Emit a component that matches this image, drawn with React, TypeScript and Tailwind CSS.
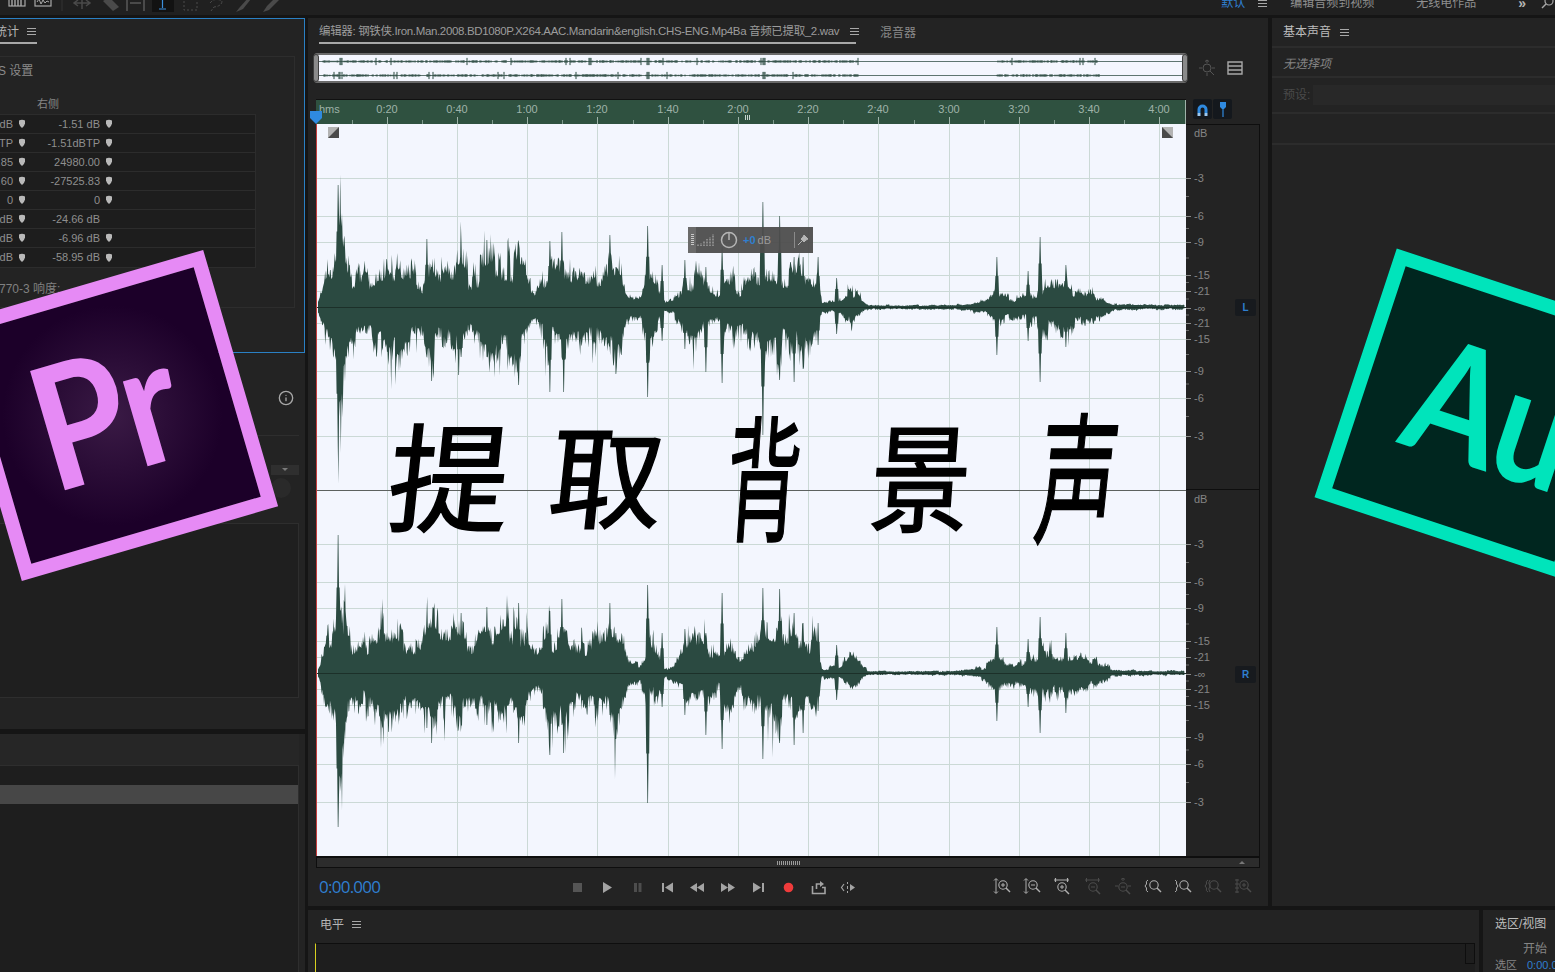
import { Info } from "lucide-react";

function rng(seed: number) {
  let a = seed;
  return () => {
    a |= 0;
    a = (a + 0x6d2b79f5) | 0;
    let t = Math.imul(a ^ (a >>> 15), 1 | a);
    t = (t + Math.imul(t ^ (t >>> 7), 61 | t)) ^ t;
    return ((t ^ (t >>> 14)) >>> 0) / 4294967296;
  };
}

const ENV: [number, number][] = [
  [318, 5], [325, 26], [329, 34], [336, 40], [338, 90], [341, 90], [343, 62], [347, 40], [350, 32], [366, 30], [370, 30], [377, 44], [395, 45], [422, 22], [427, 52], [445, 32], [461, 40], [470, 30], [481, 35], [505, 50], [523, 36], [534, 16], [548, 35], [563, 40], [570, 30], [591, 26], [613, 45], [623, 26], [627, 12], [640, 10], [647, 26], [657, 20], [665, 4], [673, 7], [684, 20], [698, 30], [718, 16], [731, 35], [740, 18], [763, 45], [784, 36], [799, 38], [818, 30], [822, 6], [838, 7], [852, 20], [863, 7], [868, 2], [950, 2], [960, 3], [985, 6], [995, 18], [1005, 12], [1020, 10], [1040, 22], [1060, 24], [1085, 18], [1105, 8], [1115, 3], [1185, 2],
];

function env(x: number) {
  for (let i = 1; i < ENV.length; i++) {
    if (x <= ENV[i][0]) {
      const [x0, y0] = ENV[i - 1];
      const [x1, y1] = ENV[i];
      return y0 + ((y1 - y0) * (x - x0)) / (x1 - x0);
    }
  }
  return 2;
}

const TOP_SPIKES: [number, number, number][] = [
  [338, 122, 140], [427, 68, 50], [432, 40, 74], [461, 67, 50], [459, 40, 68], [487, 67, 50], [519, 63, 78], [550, 66, 85], [562, 75, 50], [564, 40, 85], [610, 72, 40], [616, 40, 67], [648, 81, 90], [662, 42, 34], [685, 47, 42], [706, 40, 65], [722, 60, 76], [763, 105, 128], [780, 91, 73], [794, 50, 75], [803, 50, 62], [818, 50, 38], [837, 29, 27], [997, 50, 48], [1028, 36, 34], [1040, 70, 75], [1066, 42, 40],
];
const BOT_SPIKES: [number, number, number][] = [
  [338, 138, 154], [427, 60, 55], [432, 40, 70], [461, 60, 50], [487, 66, 52], [519, 70, 70], [550, 62, 82], [562, 74, 52], [564, 40, 80], [610, 70, 42], [616, 40, 66], [648, 88, 130], [662, 40, 34], [685, 44, 42], [706, 40, 62], [722, 80, 76], [763, 85, 86], [780, 84, 70], [794, 60, 72], [803, 50, 60], [818, 50, 38], [837, 28, 27], [997, 46, 48], [1028, 34, 34], [1040, 56, 60], [1066, 40, 40],
];

function wavePath(seed: number, cy: number, spikes: [number, number, number][]) {
  const r = rng(seed);
  const up: string[] = [];
  const down: string[] = [];
  let bandU = 1;
  let bandD = 1;
  let next = 318;
  for (let x = 318; x <= 1185; x += 0.6) {
    if (x >= next) {
      bandU = 0.62 + r() * 0.72;
      bandD = 0.62 + r() * 0.72;
      next = x + 2 + r() * 5;
    }
    const e = env(x) * (x < 822 ? 1.14 : 1);
    const a = r();
    const b = r();
    let u = e * bandU * (0.74 + 0.42 * a * a);
    let d = e * bandD * (0.74 + 0.46 * b * b);
    if (e > 18 && r() < 0.06) u *= 1.38;
    if (e > 18 && r() < 0.06) d *= 1.42;
    for (const s of spikes) {
      if (Math.abs(x - s[0]) < 0.6) {
        u = Math.max(u, s[1]);
        d = Math.max(d, s[2]);
      } else if (Math.abs(x - s[0]) < 1.8) {
        u = Math.max(u, s[1] * 0.62);
        d = Math.max(d, s[2] * 0.62);
      }
    }
    const px = (x - 316).toFixed(1);
    up.push(`${px} ${(cy - u).toFixed(1)}`);
    down.unshift(`${px} ${(cy + d).toFixed(1)}`);
  }
  return "M" + up.join("L") + "L" + down.join("L") + "Z";
}

const TOP_WAVE = wavePath(11, 183, TOP_SPIKES);
const BOT_WAVE = wavePath(29, 549, BOT_SPIKES);

const GRID_X = [387, 457, 527, 597, 668, 738, 808, 878, 949, 1019, 1089, 1159];
const GRID_Y = [178, 216, 242, 275, 291, 323, 339, 371, 398, 436, 544, 582, 608, 641, 657, 689, 705, 737, 764, 802];
const RULER = ["0:20", "0:40", "1:00", "1:20", "1:40", "2:00", "2:20", "2:40", "3:00", "3:20", "3:40", "4:00"];
const DB_TOP: [string, number][] = [["dB", 133], ["-3", 178], ["-6", 216], ["-9", 242], ["-15", 275], ["-21", 291], ["-∞", 308], ["-21", 323], ["-15", 339], ["-9", 371], ["-6", 398], ["-3", 436]];
const DB_BOT: [string, number][] = [["dB", 499], ["-3", 544], ["-6", 582], ["-9", 608], ["-15", 641], ["-21", 657], ["-∞", 674], ["-21", 689], ["-15", 705], ["-9", 737], ["-6", 764], ["-3", 802]];

function miniBars(seed: number, cy: number) {
  const r = rng(seed);
  const out: string[] = [];
  for (let x = 6; x < 790; x += 1) {
    const rx = x + 314;
    const inMain = (rx > 320 && rx < 857) || (rx > 994 && rx < 1098);
    if (!inMain) continue;
    if (r() < 0.3) continue;
    const big = r() < 0.04 || (rx > 336 && rx < 341) || (rx > 644 && rx < 648) || (rx > 760 && rx < 764);
    const h = big ? 3.6 : 0.6 + r() * 0.9;
    out.push(`M${x} ${(cy - h).toFixed(1)}V${(cy + h).toFixed(1)}`);
  }
  return out.join("");
}

const rowsData: [string, string, boolean][] = [
  ["dB", "-1.51 dB", true],
  ["TP", "-1.51dBTP", true],
  [".85", "24980.00", true],
  [".60", "-27525.83", true],
  ["0", "0", true],
  ["dB", "-24.66 dB", false],
  ["dB", "-6.96 dB", true],
  ["dB", "-58.95 dB", true],
];

const BIG: [string, string][] = [
  ["提", "[transform:skewX(-6deg)_scale(1.03,1)]"],
  ["取", "[transform:skewX(-6deg)_scale(0.97,0.95)]"],
  ["背", "[transform:skewX(-4deg)_scale(0.63,1.15)]"],
  ["景", "[transform:skewX(-4deg)_scale(0.85,1)]"],
  ["声", "[transform:skewX(-6deg)_scale(0.68,1.2)]"],
];

function Burger({ className = "" }: { className?: string }) {
  return (
    <span className={`flex w-[9px] flex-col gap-[2px] ${className}`}>
      <span className="h-px bg-[#a8a8a8]" />
      <span className="h-px bg-[#a8a8a8]" />
      <span className="h-px bg-[#a8a8a8]" />
    </span>
  );
}

function Marker() {
  return (
    <svg width="8" height="10" viewBox="0 0 8 10" className="shrink-0">
      <path d="M1 1.5Q4 0 7 1.5V4.5Q6.5 7 4 9Q1.5 7 1 4.5Z" fill="#b9b9b9" />
    </svg>
  );
}

function TopTools() {
  const c = "#4a4a4a";
  return (
    <svg width="300" height="15" viewBox="0 0 300 15" className="shrink-0">
      <rect x="9" y="-3" width="16" height="9" fill="none" stroke="#a8a8a8" strokeWidth="1.2" />
      <path d="M12 -2V6M15 -2V6M18 -2V6M21 -2V6" stroke="#a8a8a8" strokeWidth="1.4" />
      <rect x="35" y="-3" width="16" height="9" fill="none" stroke="#a8a8a8" strokeWidth="1.2" />
      <path d="M37 2L39 -1L41 4L43 0L45 3L47 1L49 2" fill="none" stroke="#a8a8a8" />
      <path d="M62 -2V11" stroke="#333" />
      <path d="M74 3H90M82 -3V9M86 0L90 3L86 6M78 0L74 3L78 6" fill="none" stroke={c} strokeWidth="1.5" />
      <path d="M103 1L109 -3L119 7L113 11Z" fill={c} />
      <path d="M127 -2V11M144 -2V11M130 3H141" stroke={c} strokeWidth="2" />
      <rect x="152" y="-2" width="22" height="14" fill="#121212" />
      <path d="M162.500 -2V8M159 9H166" stroke="#3c90dd" strokeWidth="1.2" fill="none" />
      <rect x="184" y="-1" width="13" height="11" fill="none" stroke={c} strokeDasharray="2 2" />
      <path d="M210 3Q215 -3 222 1Q222 6 214 7L211 11" fill="none" stroke={c} strokeDasharray="3 1.5" />
      <path d="M236 12L240 7L249 -3L251 -1L243 9Z" fill={c} />
      <path d="M263 12L267 6L276 -3L279 0L269 10Z" fill={c} />
    </svg>
  );
}

function Transport() {
  const g = "#a3a3a3";
  const items = [
    <rect key="s" x="4" y="3" width="9" height="9" fill="#555" />,
    <path key="p" d="M4 2L13 7.500L4 13Z" fill={g} />,
    <path key="pa" d="M5 3H8V12H5ZM9.500 3H12.500V12H9.500Z" fill="#4d4d4d" />,
    <path key="b" d="M3 3H5V12H3ZM14 2.500V12.500L6 7.500Z" fill={g} />,
    <path key="r" d="M8 3V12L1 7.500ZM15 3V12L8 7.500Z" fill={g} />,
    <path key="f" d="M1 3V12L8 7.500ZM8 3V12L15 7.500Z" fill={g} />,
    <path key="n" d="M3 2.500V12.500L11 7.500ZM12 3H14V12H12Z" fill={g} />,
    <circle key="rec" cx="8.500" cy="7.500" r="4.800" fill="#ef3b3b" />,
    <g key="l">
      <path d="M2.500 6V13.500H15V7.500H12" fill="none" stroke={g} strokeWidth="1.600" />
      <path d="M6.500 9V4H10" fill="none" stroke={g} strokeWidth="1.600" />
      <path d="M10 1L14 4L10 7Z" fill={g} />
    </g>,
    <g key="sk">
      <path d="M4 4L1.500 7.500L4 11" fill="none" stroke={g} strokeWidth="1.200" />
      <path d="M7.500 2V4M7.500 6V9M7.500 11V13" stroke={g} />
      <path d="M10 4L15 7.500L10 11Z" fill={g} />
    </g>,
  ];
  return (
    <div className="flex">
      {items.map((it, i) => (
        <span key={i} className="flex w-[30.200px] justify-center">
          <svg width="17" height="15" viewBox="0 0 17 15">
            {it}
          </svg>
        </span>
      ))}
    </div>
  );
}

function ZoomTool({ kind, on }: { kind: number; on: boolean }) {
  const c = on ? "#b0b0b0" : "#4c4c4c";
  const extras: Record<number, JSX.Element> = {
    0: <path d="M3 1V15M1 2.500L3 0.500L5 2.500M1 13.500L3 15.500L5 13.500" stroke={c} fill="none" />,
    1: <path d="M3 1V15M1 2.500L3 0.500L5 2.500M1 13.500L3 15.500L5 13.500" stroke={c} fill="none" />,
    2: <path d="M1 2H16M2.500 0V4M14.500 0V4" stroke={c} fill="none" strokeWidth="1.200" />,
    3: <path d="M1 2H16M2.500 0V4M14.500 0V4" stroke={c} fill="none" />,
    4: <path d="M9 0V3M7 1.500L9 0L11 1.500M1 8H4M14 8H17" stroke={c} fill="none" />,
    5: <path d="M4 2Q1.500 3 2.500 6L1 8L2.500 10Q1.500 13 4 14" stroke={c} fill="none" />,
    6: <path d="M1 2Q3.500 3 2.500 6L4 8L2.500 10Q3.500 13 1 14" stroke={c} fill="none" />,
    7: <path d="M4 2Q1.500 3 2.500 6L1 8L2.500 10Q1.500 13 4 14M6 2Q3.500 5 6 8Q3.500 11 6 14" stroke={c} fill="none" />,
    8: <path d="M3 1V15M1 2H5M1 14H5M1 6H5M1 10H5" stroke={c} fill="none" />,
  };
  const plus = kind === 0 || kind === 2 || kind === 8;
  const minus = kind === 1 || kind === 3 || kind === 4;
  const cx = kind === 2 || kind === 3 || kind === 4 ? 9 : 10;
  const cy = kind === 2 || kind === 3 || kind === 4 ? 9 : 7;
  return (
    <span className="flex w-[30.200px] justify-center">
      <svg width="18" height="18" viewBox="0 0 18 18">
        {extras[kind]}
        <circle cx={cx} cy={cy} r="4.200" fill="none" stroke={c} strokeWidth="1.100" />
        <path d={`M${cx + 3} ${cy + 3}L${cx + 7} ${cy + 7}`} stroke={c} strokeWidth="1.500" />
        {plus && <path d={`M${cx - 2} ${cy}H${cx + 2}M${cx} ${cy - 2}V${cy + 2}`} stroke={c} />}
        {minus && <path d={`M${cx - 2} ${cy}H${cx + 2}`} stroke={c} />}
      </svg>
    </span>
  );
}

function WaveCanvas() {
  return (
    <svg width="870" height="732" viewBox="0 0 870 732" className="block">
      <rect width="870" height="732" fill="#f3f6fe" />
      {GRID_X.map((x) => (
        <path key={x} d={`M${x - 316 + 0.5} 0V732`} stroke="#cbd9d6" />
      ))}
      {GRID_Y.map((y) => (
        <path key={y} d={`M0 ${y - 124 + 0.5}H870`} stroke="#cbd9d6" />
      ))}
      <path d={TOP_WAVE} fill="#2b4a41" />
      <path d={BOT_WAVE} fill="#2b4a41" />
      <path d="M0 183.500H870M0 549.500H870" stroke="#1c3029" />
      <path d="M0 366.500H870" stroke="#5c615f" />
      <path d="M0.500 0V732" stroke="#c43c3c" />
      <rect x="12" y="3" width="11" height="11" fill="#b3b3b3" />
      <path d="M23 3V14H12Z" fill="#4a4a4a" />
      <rect x="846" y="3" width="11" height="11" fill="#b3b3b3" />
      <path d="M846 3V14H857Z" fill="#4a4a4a" />
    </svg>
  );
}

function DbScale({ items, start, height }: { items: [string, number][]; start: number; height: number }) {
  const minor: number[] = [];
  for (let i = 1; i < items.length - 1; i++) {
    minor.push((items[i][1] + items[i + 1][1]) / 2 - 1);
  }
  return (
    <svg width="74" height={height} viewBox={`0 0 74 ${height}`} className="block">
      {items.map(([t, y], i) => (
        <g key={i}>
          {i > 0 && <path d={`M0 ${y - start + 0.5}H5`} stroke="#8a8a8a" />}
          <text x="8" y={y - start + 4} fontSize="11" fill="#858585" fontFamily="Liberation Sans, sans-serif">
            {t}
          </text>
        </g>
      ))}
      {minor.map((y, i) => (
        <path key={i} d={`M0 ${y - start + 0.5}H3`} stroke="#6a6a6a" />
      ))}
    </svg>
  );
}

function ChannelBadge({ t }: { t: string }) {
  return (
    <span className="absolute left-[49px] flex h-[17px] w-[21px] items-center justify-center rounded-[2px] bg-[#171a1e] text-[10px] font-bold text-[#2f7fd0]">
      {t}
    </span>
  );
}

function LeftColumn() {
  return (
    <div className="flex h-full w-[305px] shrink-0 flex-col">
      <div className="h-[335px] border-b border-r border-t border-[#2a80c4] bg-[#232323]">
        <div className="flex h-[25px] items-start">
          <div className="flex h-[25px] w-[37px] items-center justify-between border-b-2 border-[#a8a8a8] pr-[1px] pt-[2px]">
            <span className="-ml-[5px] text-[12px] text-[#b4b4b4]">统计</span>
            <Burger />
          </div>
        </div>
        <div className="mt-[12px] h-[252px] w-[295px] border-b border-r border-t border-[#2d2d2d] pt-[7px]">
          <div className="-ml-[2px] text-[12px] leading-[14px] text-[#8a8a8a]">S 设置</div>
          <div className="ml-[37px] mt-[19px] text-[11px] leading-[14px] text-[#858585]">右侧</div>
          <div className="mt-[3px] w-[256px] border-b border-r border-t border-[#2c2c2c] bg-[#1d1d1d]">
            {rowsData.map(([a, b, m], i) => (
              <div key={i} className="flex h-[19px] items-center border-b border-[#2c2c2c] text-[11px] text-[#8f8f8f] last:border-b-0">
                <span className="flex w-[13px] justify-end whitespace-nowrap">{a}</span>
                <span className="ml-[5px] w-[8px]">
                  <Marker />
                </span>
                <span className="w-[74px] whitespace-nowrap text-right">{b}</span>
                <span className="ml-[5px] w-[8px]">{m && <Marker />}</span>
              </div>
            ))}
          </div>
          <div className="-ml-[1px] mt-[14px] text-[12px] leading-[14px] text-[#808080]">770-3 响度:</div>
        </div>
      </div>
      <div className="flex h-[376px] flex-col bg-[#232323] pr-[6px]">
        <div className="flex h-[83px] items-start justify-end border-b border-[#2e2e2e] pr-[5px] pt-[37px]">
          <Info size={16} className="text-[#a8a8a8]" />
        </div>
        <div className="flex h-[87px] flex-col items-end pt-[29px]">
          <div className="flex h-[10px] w-[28px] items-start justify-center bg-[#2f2f2f]">
            <span className="mt-[3px] h-0 w-0 border-x-[3px] border-t-[3px] border-x-transparent border-t-[#7a7a7a]" />
          </div>
          <div className="mr-[8px] mt-[3px] h-[20px] w-[20px] rounded-full bg-[#2a2a2a]" />
        </div>
        <div className="h-[175px] border-b border-r border-t border-[#2e2e2e] bg-[#1f1f1f]" />
        <div className="flex-1" />
      </div>
      <div className="h-[5px] bg-[#151515]" />
      <div className="flex flex-1 flex-col bg-[#232323] pr-[6px]">
        <div className="h-[32px] border-b border-[#2e2e2e] bg-[#262626]" />
        <div className="flex-1 border-r border-[#2e2e2e] bg-[#1e1e1e] pt-[19px]">
          <div className="h-[19px] bg-[#474747]" />
        </div>
      </div>
    </div>
  );
}

function Editor() {
  return (
    <div className="flex h-full w-[960px] shrink-0 flex-col bg-[#232323]">
      <div className="flex h-[26px] items-center pl-[11px]">
        <div className="flex h-[26px] w-[537px] items-center gap-[5px] border-b-2 border-[#a8a8a8] pt-[3px]">
          <span className="whitespace-nowrap text-[11.5px] tracking-[-0.35px] text-[#9c9c9c]">
            编辑器: 钢铁侠.Iron.Man.2008.BD1080P.X264.AAC.Mandarin&amp;english.CHS-ENG.Mp4Ba 音频已提取_2.wav
          </span>
          <Burger className="ml-auto mr-[-3px]" />
        </div>
        <span className="ml-[24px] pt-[3px] text-[12px] text-[#8a8a8a]">混音器</span>
      </div>
      <div className="ml-[6px] mt-[9px] flex items-center">
        <div className="relative h-[30px] w-[873px] rounded-[3px] border-2 border-[#6a6a6a] bg-[#f4f6fe]">
          <svg width="869" height="26" viewBox="0 0 869 26" className="block">
            <path d="M2 6.500H867M2 20.500H867" stroke="#39544c" strokeWidth="0.800" />
            <path d={miniBars(5, 6.5)} stroke="#2b4a41" strokeWidth="1" />
            <path d={miniBars(8, 20.5)} stroke="#2b4a41" strokeWidth="1" />
          </svg>
          <span className="absolute -left-[3px] -top-[1px] h-[28px] w-[6px] rounded-[3px] border border-[#3e3e3e] bg-[#8a8a8a]" />
          <span className="absolute -right-[3px] -top-[1px] h-[28px] w-[6px] rounded-[3px] border border-[#3e3e3e] bg-[#8a8a8a]" />
        </div>
        <svg width="18" height="18" viewBox="0 0 18 18" className="ml-[11px]">
          <circle cx="9" cy="9" r="4" fill="none" stroke="#555" />
          <path d="M12 12L16 16M9 1V4M7 2.500L9 1L11 2.500M1 9H4M14 9H17M9 14V17" stroke="#555" fill="none" />
        </svg>
        <svg width="16" height="14" viewBox="0 0 16 14" className="ml-[11px]">
          <path d="M1 1H15V13H1ZM1 5H15M1 9H15" fill="none" stroke="#a8a8a8" strokeWidth="1.400" />
        </svg>
      </div>
      <div className="ml-[8px] mt-[16px] flex">
        <div className="relative h-[25px] w-[870px] border-t border-[#111] bg-[#2f5140]">
          <svg width="870" height="24" viewBox="0 0 870 24" className="block">
            {GRID_X.map((x, i) => (
              <g key={x}>
                <text x={x - 316} y="13" textAnchor="middle" fontSize="11" fill="#9fb3a9" fontFamily="Liberation Sans, sans-serif">
                  {RULER[i]}
                </text>
                <path d={`M${x - 316 + 0.5} 17V24`} stroke="#9fb3a9" />
                <path d={`M${x - 316 - 35 + 0.5} 20V24`} stroke="#7e998c" />
              </g>
            ))}
            <text x="3" y="13" fontSize="11" fill="#9fb3a9" fontFamily="Liberation Sans, sans-serif">
              hms
            </text>
            <path d="M429.500 15V20M431.500 15V20M433.500 15V20" stroke="#c9d5cf" />
            <path d="M869.500 0V24" stroke="#9fb3a9" />
          </svg>
          <svg width="12" height="13" viewBox="0 0 12 13" className="absolute -left-[6px] top-[11px]">
            <path d="M0 0H12V7L6 13L0 7Z" fill="#2f8ae0" />
          </svg>
        </div>
        <div className="ml-[7px] flex gap-[1px]">
          <span className="flex h-[20px] w-[19px] items-center justify-center rounded-[2px] bg-[#14181d]">
            <svg width="13" height="13" viewBox="0 0 13 13">
              <path d="M3 10V6.500A3.500 3.500 0 0 1 10 6.500V10" fill="none" stroke="#2f8ae0" strokeWidth="3" />
              <path d="M1.500 10H4.500V13H1.500ZM8.500 10H11.500V13H8.500Z" fill="#9cc8f0" />
            </svg>
          </span>
          <span className="flex h-[20px] w-[19px] items-center justify-center rounded-[2px] bg-[#14181d]">
            <svg width="10" height="15" viewBox="0 0 10 15">
              <path d="M2 0H8V5L6 7H4L2 5Z" fill="#2f8ae0" />
              <path d="M5 7V15" stroke="#2f8ae0" strokeWidth="1.200" />
            </svg>
          </span>
        </div>
      </div>
      <div className="ml-[8px] flex h-[732px]">
        <div className="relative h-[732px] w-[870px]">
          <WaveCanvas />
          <div className="absolute left-[372px] top-[103px] flex h-[26px] w-[125px] items-center bg-[#4d4d4d]/95">
            <span className="flex h-full w-[8px] items-center justify-center bg-[#6a6a6a]">
              <span className="h-[12px] w-[3px] bg-[repeating-linear-gradient(#c8c8c8_0_1px,transparent_1px_2px)]" />
            </span>
            <svg width="18" height="14" viewBox="0 0 18 14" className="ml-[1px]">
              <path d="M1 13V11M4 13V10M7 13V8M10 13V6M13 13V4M16 13V1" stroke="#9a9a9a" strokeWidth="1.500" strokeDasharray="1 0.500" />
            </svg>
            <svg width="18" height="18" viewBox="0 0 18 18" className="ml-[5px]">
              <circle cx="9" cy="9" r="7.500" fill="none" stroke="#b5b5b5" strokeWidth="1.500" />
              <path d="M9 2V9" stroke="#b5b5b5" strokeWidth="1.500" />
            </svg>
            <span className="ml-[5px] text-[11px] font-bold text-[#2f7fd0]">+0</span>
            <span className="ml-[2px] text-[11px] text-[#9a9a9a]">dB</span>
            <span className="ml-[23px] h-[16px] w-px bg-[#8a8a8a]" />
            <svg width="10" height="10" viewBox="0 0 10 10" className="ml-[3px]">
              <path d="M6 0L10 4L8 5L6 7L3 4L5 2ZM4 6L0 10" fill="#b5b5b5" stroke="#b5b5b5" />
            </svg>
          </div>
          <div className="absolute left-[56px] top-[268px] flex text-[118px] leading-[160px] text-black [-webkit-text-stroke:1.5px_black] [font-family:'Noto_Sans_CJK_SC',sans-serif]">
            {BIG.map(([t, c]) => (
              <span key={t} className={`flex w-[157px] justify-center ${c}`}>
                {t}
              </span>
            ))}
          </div>
        </div>
        <div className="flex h-[732px] w-[74px] flex-col border-r border-[#0e0e0e]">
          <div className="relative h-[366px] border-b border-t border-[#0e0e0e]">
            <DbScale items={DB_TOP} start={125} height={364} />
            <div className="absolute top-[174px]">
              <ChannelBadge t="L" />
            </div>
          </div>
          <div className="relative h-[366px]">
            <DbScale items={DB_BOT} start={490} height={366} />
            <div className="absolute top-[176px]">
              <ChannelBadge t="R" />
            </div>
          </div>
        </div>
      </div>
      <div className="ml-[8px] flex h-[12px] w-[944px] items-center border-b border-l border-r border-t-2 border-b-[#0e0e0e] border-l-[#0e0e0e] border-r-[#0e0e0e] border-t-[#0e0e0e] bg-[#2c2c2c]">
        <span className="ml-[460px] h-[4px] w-[24px] bg-[repeating-linear-gradient(90deg,#9a9a9a_0_1px,transparent_1px_2px)]" />
        <span className="ml-[438px] h-0 w-0 border-x-[3px] border-b-[3px] border-x-transparent border-b-[#777]" />
      </div>
      <div className="flex flex-1 items-center">
        <span className="ml-[11px] w-[243px] text-[17px] tracking-[-0.75px] text-[#2f7fd0] [font-family:'Open_Sans',sans-serif]">0:00.000</span>
        <Transport />
        <span className="ml-[123px] flex">
          {[0, 1, 2, 3, 4, 5, 6, 7, 8].map((k) => (
            <ZoomTool key={k} kind={k} on={k < 3 || k === 5 || k === 6} />
          ))}
        </span>
      </div>
    </div>
  );
}

function RightPanel() {
  return (
    <div className="flex h-full flex-1 flex-col bg-[#232323]">
      <div className="flex h-[30px] items-center gap-[9px] border-b-2 border-[#2c2c2c] pl-[11px]">
        <span className="text-[12px] text-[#bdbdbd]">基本声音</span>
        <Burger />
      </div>
      <div className="flex h-[30px] items-center border-b-2 border-[#2c2c2c] pl-[11px] pt-[3px]">
        <span className="text-[12px] italic text-[#858585]">无选择项</span>
      </div>
      <div className="flex h-[36px] items-center border-b-2 border-[#2c2c2c] pl-[11px]">
        <span className="text-[12px] text-[#4a4a4a]">预设:</span>
        <span className="ml-[3px] h-[20px] flex-1 bg-[#282828]" />
      </div>
      <div className="h-[31px] border-b-2 border-[#2c2c2c]" />
    </div>
  );
}

function BottomRow() {
  return (
    <div className="flex h-[62px] gap-[4px]">
      <div className="flex w-[1171px] flex-col bg-[#232323]">
        <div className="flex h-[29px] items-center gap-[8px] pl-[12px]">
          <span className="text-[12px] text-[#b4b4b4]">电平</span>
          <Burger />
        </div>
        <div className="ml-[7px] mt-[4px] flex w-[1160px] flex-1 justify-between border-l border-t border-l-[#d8d020] border-t-[#0e0e0e] bg-[#1e1e1e]">
          <span />
          <span className="h-[20px] w-[10px] border-b border-l border-r border-[#0e0e0e]" />
        </div>
      </div>
      <div className="flex flex-1 flex-col overflow-hidden bg-[#232323] pl-[12px]">
        <span className="mt-[6px] whitespace-nowrap text-[12px] leading-[16px] text-[#bdbdbd]">选区/视图</span>
        <span className="mt-[9px] pl-[28px] text-[12px] leading-[16px] text-[#858585]">开始</span>
        <span className="mt-[1px] flex items-center gap-[10px] whitespace-nowrap text-[11px] leading-[14px] text-[#858585]">
          选区 <span className="text-[#2f7fd0]">0:00.000</span>
        </span>
      </div>
    </div>
  );
}

export default function App() {
  return (
    <div className="relative flex h-[972px] w-[1555px] flex-col overflow-hidden bg-[#151515] [font-family:'Liberation_Sans','Noto_Sans_CJK_SC',sans-serif]">
      <div className="flex h-[15px] shrink-0 items-start overflow-hidden bg-[#202020]">
        <TopTools />
        <div className="-mt-[5px] ml-auto flex items-center whitespace-nowrap text-[12px] leading-[16px] text-[#8f8f8f]">
          <span className="text-[#2f7fd0]">默认</span>
          <Burger className="ml-[13px]" />
          <span className="ml-[23px]">编辑音频到视频</span>
          <span className="ml-[42px]">无线电作品</span>
          <span className="ml-[42px] text-[14px] font-bold text-[#b4b4b4]">»</span>
          <svg width="16" height="16" viewBox="0 0 16 16" className="ml-[14px] -mr-[1px]">
            <circle cx="9" cy="6" r="4" fill="none" stroke="#a8a8a8" strokeWidth="1.200" />
            <path d="M6 9L2 13" stroke="#a8a8a8" strokeWidth="1.400" />
          </svg>
        </div>
      </div>
      <div className="flex flex-1 pt-[3px]">
        <LeftColumn />
        <div className="flex flex-1 flex-col pl-[3px]">
          <div className="flex h-[888px] gap-[4px]">
            <Editor />
            <RightPanel />
          </div>
          <div className="h-[4px]" />
          <BottomRow />
        </div>
      </div>

      <div className="absolute left-[-21px] top-[282px] flex h-[267px] w-[267px] rotate-[-16.3deg] items-center justify-center border-[14px] border-[#e68af5] bg-[radial-gradient(circle_at_50%_50%,#3a1a45_0%,#1c0029_65%)] pb-[16px] pr-[16px]">
        <span className="text-[172px] font-bold leading-none tracking-[-4px] text-[#e68af5] [font-family:'Lato',sans-serif] [transform:scaleX(0.88)]">Pr</span>
      </div>
      <div className="absolute left-[1349px] top-[283px] flex h-[262px] w-[262px] rotate-[18.3deg] items-center justify-center border-[14px] border-[#00e4bb] bg-[#00261f] pb-[18px] pl-[24px]">
        <span className="text-[160px] font-bold leading-none tracking-[-2px] text-[#00e4bb] [font-family:'Lato',sans-serif] [transform:scaleX(0.85)]">Au</span>
      </div>
    </div>
  );
}
